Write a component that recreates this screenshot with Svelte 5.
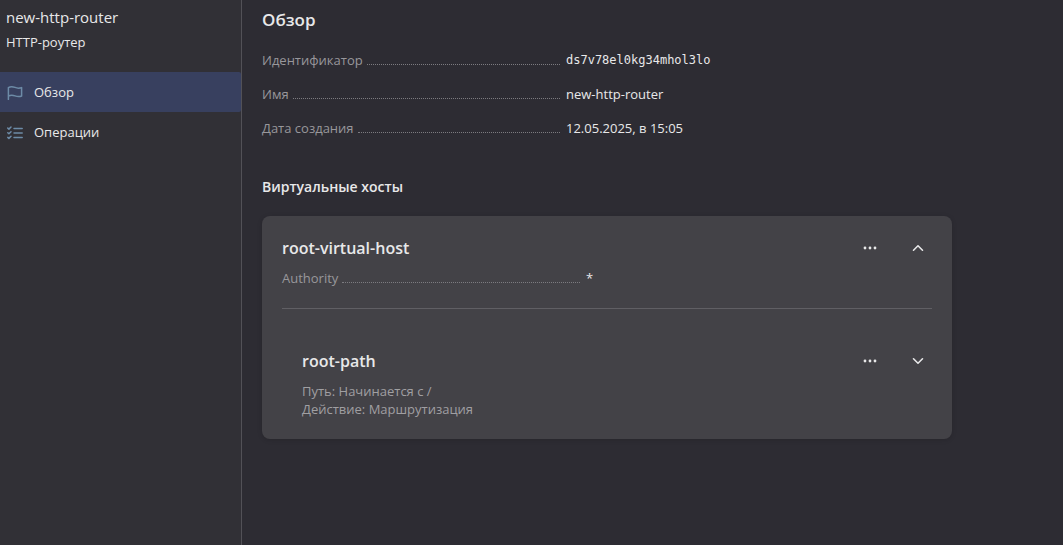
<script>
  const details = [
    { term: 'Идентификатор', value: 'ds7v78el0kg34mhol3lo', code: true },
    { term: 'Имя', value: 'new-http-router' },
    { term: 'Дата создания', value: '12.05.2025, в 15:05' }
  ];
  let expanded = $state(true);
  let routeExpanded = $state(false);
</script>

{#snippet dots()}
  <svg viewBox="0 0 16 16" fill="currentColor" aria-hidden="true">
    <circle cx="3" cy="8" r="1.4" /><circle cx="8" cy="8" r="1.4" /><circle cx="13" cy="8" r="1.4" />
  </svg>
{/snippet}

{#snippet chevron(up)}
  <svg viewBox="0 0 16 16" fill="none" stroke="currentColor" stroke-width="1.6" stroke-linecap="round" stroke-linejoin="round" aria-hidden="true">
    <path d={up ? 'M3.5 10.2 8 5.8l4.5 4.4' : 'M3.5 5.8 8 10.2l4.5-4.4'} />
  </svg>
{/snippet}

<div class="layout">
  <aside>
    <div class="resource">
      <div class="name">new-http-router</div>
      <div class="kind">HTTP-роутер</div>
    </div>
    <nav>
      <a class="item current" href="#overview" aria-current="page">
        <svg viewBox="0 0 16 16" fill="none" stroke="currentColor" stroke-width="1.5" stroke-linecap="round" stroke-linejoin="round" aria-hidden="true">
          <path d="M1.4 15.4V3.6C3.5 2.2 5.6 2.4 8 3.4s4.3 1 6.6.2v8.4c-2.3 1-4.2.8-6.6-.1s-4.5-1-6.6.3" />
        </svg>
        <span>Обзор</span>
      </a>
      <a class="item" href="#operations">
        <svg viewBox="0 0 16 16" fill="none" stroke="currentColor" stroke-width="1.5" stroke-linecap="round" stroke-linejoin="round" aria-hidden="true">
          <path d="M7 4.4h8.2M7 9h8.2M7 13.6h8.2M.8 4.1l1.1 1L4 3M.8 8.8l1.1 1L4 7.7M.8 13.4l1.1 1L4 12.3" />
        </svg>
        <span>Операции</span>
      </a>
    </nav>
  </aside>

  <main>
    <h1>Обзор</h1>
    <dl class="details">
      {#each details as row}
        <div class="row">
          <dt><span>{row.term}</span><i></i></dt>
          <dd class:code={row.code}>{row.value}</dd>
        </div>
      {/each}
    </dl>

    <h2>Виртуальные хосты</h2>
    <section class="card">
      <header>
        <h3>root-virtual-host</h3>
        <div class="actions">
          <button type="button" aria-label="Действия">{@render dots()}</button>
          <button type="button" aria-label="Свернуть" aria-expanded={expanded} onclick={() => (expanded = !expanded)}>{@render chevron(expanded)}</button>
        </div>
      </header>
      <dl class="authority">
        <div class="row">
          <dt><span>Authority</span><i></i></dt>
          <dd>*</dd>
        </div>
      </dl>
      {#if expanded}
        <article class="route">
          <header>
            <h3>root-path</h3>
            <div class="actions">
              <button type="button" aria-label="Действия">{@render dots()}</button>
              <button type="button" aria-label="Развернуть" aria-expanded={routeExpanded} onclick={() => (routeExpanded = !routeExpanded)}>{@render chevron(routeExpanded)}</button>
            </div>
          </header>
          <p>Путь: Начинается с /</p>
          <p>Действие: Маршрутизация</p>
        </article>
      {/if}
    </section>
  </main>
</div>

<style>
  :global(body) {
    margin: 0;
    background: #2d2c33;
  }
  .layout {
    display: grid;
    grid-template-columns: 242px minmax(0, 1fr);
    min-height: 100vh;
    color: #e8e8e9;
    font: 13px/18px "Open Sans", "Noto Sans", sans-serif;
  }
  h1, h2, h3, p, dl, dd {
    margin: 0;
  }
  aside {
    background: #313036;
    border-right: 1px solid #525157;
  }
  .resource {
    padding: 7px 6px 21px;
  }
  .name {
    font-size: 15px;
    line-height: 20px;
  }
  .kind {
    margin-top: 6px;
  }
  .item {
    display: flex;
    align-items: center;
    gap: 11px;
    height: 40px;
    padding-left: 7px;
    color: inherit;
    text-decoration: none;
  }
  .current {
    background: #38405f;
    border-radius: 0 2px 2px 0;
  }
  svg {
    display: block;
    width: 16px;
    height: 16px;
  }
  .item svg {
    color: #6d8ba7;
  }
  main {
    padding: 8px 20px;
  }
  h1 {
    font-size: 17px;
    line-height: 24px;
    font-weight: 600;
  }
  .details {
    display: grid;
    gap: 16px;
    margin-top: 19px;
  }
  .row {
    display: grid;
    grid-template-columns: 298px minmax(0, 1fr);
    gap: 6px;
  }
  dt {
    display: flex;
    color: #98979b;
  }
  dt i {
    flex: 1;
    height: 13px;
    margin-left: 4px;
    border-bottom: 1px dotted #7c7b80;
  }
  .code {
    font-family: "DejaVu Sans Mono", monospace;
    font-size: 12px;
  }
  h2 {
    margin-top: 40px;
    font-size: 14px;
    line-height: 20px;
    font-weight: 600;
  }
  .card {
    box-sizing: border-box;
    max-width: 690px;
    margin-top: 19px;
    padding: 18px 20px 21px;
    border-radius: 8px;
    background: #434247;
    box-shadow: 0 1px 5px rgb(0 0 0 / 15%);
  }
  header {
    display: flex;
    align-items: center;
    justify-content: space-between;
  }
  h3 {
    font-size: 16px;
    line-height: 24px;
    font-weight: 600;
  }
  .actions {
    display: flex;
    gap: 20px;
  }
  button {
    display: grid;
    place-items: center;
    width: 28px;
    height: 28px;
    padding: 0;
    border: 0;
    border-radius: 6px;
    background: transparent;
    color: #e8e8e9;
    cursor: pointer;
  }
  .authority {
    padding: 7px 0 21px;
    border-bottom: 1px solid #605f64;
  }
  .route {
    padding: 38px 0 0 20px;
  }
  .route header {
    margin-bottom: 7px;
  }
  .route p {
    color: #a09fa2;
  }
</style>
